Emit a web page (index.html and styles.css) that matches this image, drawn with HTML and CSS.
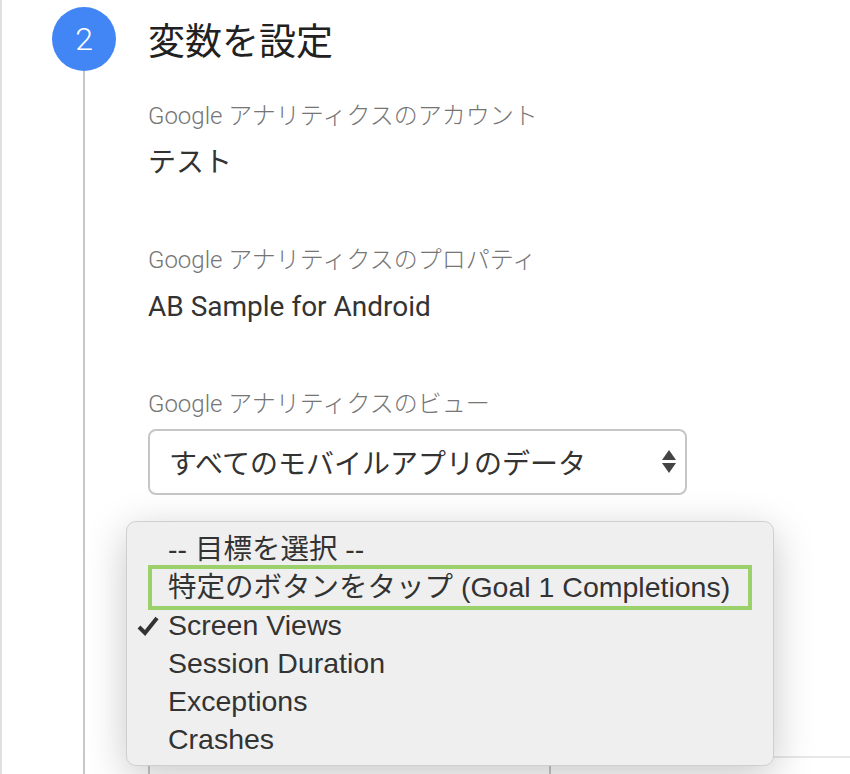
FILE: index.html
```html
<!DOCTYPE html>
<html lang="ja">
<head>
<meta charset="utf-8">
<title>変数を設定</title>
<link rel="stylesheet" href="styles.css">
</head>
<body>
<div class="page">
  <div class="rail"></div>
  <div class="timeline">
    <div class="step-num">2</div>
    <div class="step-line"></div>
  </div>
  <div class="content">
    <h1 class="title">変数を設定</h1>
    <div class="field">
      <div class="label">Google アナリティクスのアカウント</div>
      <div class="value">テスト</div>
    </div>
    <div class="field">
      <div class="label">Google アナリティクスのプロパティ</div>
      <div class="value">AB Sample for Android</div>
    </div>
    <div class="field">
      <div class="label">Google アナリティクスのビュー</div>
      <div class="select">
        <span class="select-text">すべてのモバイルアプリのデータ</span>
        <svg class="arrows" width="14" height="24" viewBox="0 0 14 24"><path d="M7 0 L14 10 L0 10 Z" fill="#444"/><path d="M0 13 L14 13 L7 23 Z" fill="#444"/></svg>
      </div>
    </div>
    <div class="goal-area"></div>
    <div class="table-row">
      <div class="cell cell-left"></div>
      <div class="cell cell-right"></div>
    </div>
  </div>
</div>

<div class="popup">
  <div class="option">-- 目標を選択 --</div>
  <div class="option highlighted">特定のボタンをタップ (Goal 1 Completions)</div>
  <div class="option checked"><svg class="check" width="22" height="20" viewBox="0 0 22 20"><path d="M2 11 L8 17 L20 2" fill="none" stroke="#333" stroke-width="4" stroke-linejoin="miter" stroke-linecap="butt"/></svg>Screen Views</div>
  <div class="option">Session Duration</div>
  <div class="option">Exceptions</div>
  <div class="option">Crashes</div>
</div>
</body>
</html>
```

FILE: styles.css
```css
html, body {
  margin: 0;
  padding: 0;
  background: #ffffff;
  height: 774px;
  overflow: hidden;
}

body {
  font-family: Roboto, "Noto Sans CJK JP", sans-serif;
  color: #333;
  position: relative;
}

.page {
  display: flex;
  height: 774px;
}

.rail {
  width: 2px;
  background: #e0e0e0;
  flex: none;
}

.timeline {
  width: 64px;
  margin-left: 50px;
  display: flex;
  flex-direction: column;
  align-items: center;
  flex: none;
}

.step-num {
  width: 64px;
  height: 64px;
  margin-top: 7px;
  border-radius: 50%;
  background: #4285f4;
  color: #fff;
  font-family: Roboto, sans-serif;
  font-weight: 300;
  font-size: 32px;
  line-height: 64px;
  text-align: center;
  flex: none;
}

.step-line {
  flex: 1;
  width: 2px;
  background: #c8c8c8;
}

.content {
  margin-left: 32px;
  flex: 1;
  display: flex;
  flex-direction: column;
}

.content > * {
  flex-shrink: 0;
}

.title {
  margin: 7px 0 0 0;
  font-family: "Noto Sans CJK JP", sans-serif;
  font-weight: 400;
  font-size: 37px;
  line-height: 64px;
  color: #212121;
}

.field {
  display: flex;
  flex-direction: column;
  margin-top: 29px;
}

.field + .field {
  margin-top: 63px;
}

.label {
  font-family: Roboto, "Noto Sans CJK JP", sans-serif;
  font-weight: 300;
  font-size: 24px;
  line-height: 32px;
  color: #757575;
}

.value {
  margin-top: 13px;
  font-family: Roboto, "Noto Sans CJK JP", sans-serif;
  font-size: 28px;
  line-height: 36px;
  color: #333;
}

.select {
  margin-top: 9px;
  width: 539px;
  height: 66px;
  box-sizing: border-box;
  border: 2px solid #c6c6c6;
  border-radius: 8px;
  display: flex;
  align-items: center;
  justify-content: space-between;
  padding: 0 9px 0 19px;
}

.select-text {
  font-family: "Noto Sans CJK JP", sans-serif;
  font-size: 28px;
  color: #333;
}

.arrows {
  display: block;
}

.goal-area {
  height: 261px;
}

.table-row {
  display: flex;
  border-top: 2px solid #e8e8e8;
  height: 16px;
}

.cell-left {
  width: 399px;
  border-left: 2px solid #c8c8c8;
  border-right: 2px solid #c8c8c8;
}

.cell-right {
  flex: 1;
}

.popup {
  position: absolute;
  left: 126px;
  top: 521px;
  width: 648px;
  height: 245px;
  box-sizing: border-box;
  padding-top: 8px;
  background: #efefef;
  border: 1px solid #cfcfcf;
  border-radius: 10px;
  box-shadow: 0 10px 40px rgba(0, 0, 0, 0.22);
  font-family: "Liberation Sans", "Noto Sans CJK JP", sans-serif;
  color: #333;
}

.option {
  position: relative;
  font-size: 28.5px;
  line-height: 38px;
  padding-left: 41px;
  white-space: nowrap;
}

.option.highlighted::after {
  content: "";
  position: absolute;
  left: 21px;
  right: 21px;
  top: -3px;
  bottom: -4px;
  border: 4px solid #9bd06a;
}

.check {
  position: absolute;
  left: 10px;
  top: 10px;
}
```
